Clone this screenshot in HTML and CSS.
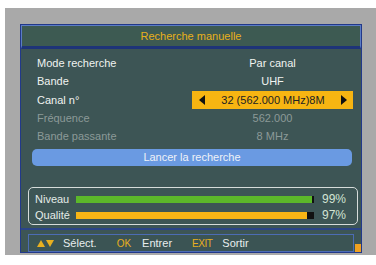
FILE: index.html
```html
<!DOCTYPE html>
<html>
	<head>
		<meta charset="utf-8">
		<title>Recherche manuelle</title>
		<link rel="stylesheet" href="styles.css">
	</head>
	<body>
		<div class="screen">
			<div class="panel">
				<div class="title">Recherche manuelle</div>

				<div class="content">
					<div class="rows">
						<div class="label">Mode recherche</div>
						<div class="value">Par canal</div>

						<div class="label">Bande</div>
						<div class="value">UHF</div>

						<div class="label">Canal n°</div>
						<div class="value selected">
							<span class="arrow left"></span>
							<span>32 (562.000 MHz)8M</span>
							<span class="arrow right"></span>
						</div>

						<div class="label off">Fréquence</div>
						<div class="value off">562.000</div>

						<div class="label off">Bande passante</div>
						<div class="value off">8 MHz</div>
					</div>

					<div class="button">Lancer la recherche</div>

					<div class="signal">
						<div class="meter">
							<span class="meter-name">Niveau</span>
							<span class="bar green"><span class="fill" style="width: 99%"></span></span>
							<span class="pct">99%</span>
						</div>
						<div class="meter">
							<span class="meter-name">Qualité</span>
							<span class="bar orange"><span class="fill" style="width: 97%"></span></span>
							<span class="pct">97%</span>
						</div>
					</div>
				</div>

				<div class="bottom">
					<div class="footer">
						<span class="key tri"><span class="up"></span><span class="down"></span></span>
						<span class="hint">Sélect.</span>
						<span class="key ok">OK</span>
						<span class="hint">Entrer</span>
						<span class="key exit">EXIT</span>
						<span class="hint">Sortir</span>
					</div>
					<span class="blip"></span>
				</div>
			</div>
		</div>
	</body>
</html>
```

FILE: styles.css
```css
body {
	margin: 0;
	background: #fff;
	font-family: "Liberation Sans", Arial, sans-serif;
	font-size: 11px;
}

.screen {
	margin: 8px 0 0 5px;
	height: 247px;
	background: #a9a9a9;
	padding: 16px 0 0 15px;
	box-sizing: border-box;
}

.panel {
	width: 342px;
	height: 229px;
	box-sizing: border-box;
	border: 1px solid #22398a;
	background: #3d5555;
	display: flex;
	flex-direction: column;
}

.title {
	height: 24px;
	line-height: 20px;
	box-sizing: border-box;
	border: 1px solid #5b7cc4;
	border-bottom: 3px solid #1e3478;
	background: #3d5a52;
	color: #e8b01a;
	text-align: center;
}

.content {
	padding: 5px 9px 0 10px;
	height: 181px;
	box-sizing: border-box;
	border-bottom: 2px solid #2a4488;
}

.rows {
	display: grid;
	grid-template-columns: 161px 161px;
	grid-auto-rows: 18.3px;
	align-items: center;
}

.label {
	color: #f0f3f0;
	padding-left: 6px;
}

.value {
	color: #f0f3f0;
	text-align: center;
}

.off {
	color: #8c9a98;
}

.value.selected {
	background: #f7b512;
	color: #222;
	height: 18px;
	display: flex;
	align-items: center;
	justify-content: space-between;
	padding: 0 6px 0 7px;
}

.arrow {
	width: 0;
	height: 0;
	border-top: 5px solid transparent;
	border-bottom: 5px solid transparent;
}

.arrow.left {
	border-right: 6px solid #111;
}

.arrow.right {
	border-left: 6px solid #111;
}

.button {
	margin: 4px 0 0 1px;
	height: 17px;
	line-height: 17px;
	border-radius: 5px;
	background: #6a9ae2;
	color: #eef2f8;
	text-align: center;
}

.signal {
	margin: 21px -6px 0 -3px;
	height: 38px;
	box-sizing: border-box;
	border: 1px solid #d6dcda;
	border-radius: 5px;
	padding: 3px 0 0 6px;
}

.meter {
	display: flex;
	align-items: center;
	height: 16px;
}

.meter-name {
	width: 41px;
	color: #e4ece8;
}

.bar {
	width: 238px;
	height: 7px;
	background: #111;
}

.fill {
	display: block;
	height: 100%;
}

.green .fill {
	background: #5cb82a;
}

.orange .fill {
	background: #f8b515;
}

.pct {
	margin-left: 8px;
	color: #d2e4d4;
	font-size: 12px;
}

.bottom {
	flex: 1;
	display: flex;
	align-items: flex-end;
	padding: 0 0 0 7px;
}

.footer {
	width: 327px;
	height: 18px;
	box-sizing: border-box;
	border: 1px solid #4c6cb4;
	background: #3b5454;
	display: flex;
	align-items: center;
	padding-left: 8px;
	color: #e8eeee;
}

.key {
	color: #e8b020;
	font-size: 10px;
}

.tri {
	display: flex;
	gap: 1px;
	margin-right: 9px;
}

.up {
	border-left: 4px solid transparent;
	border-right: 4px solid transparent;
	border-bottom: 7px solid #e8b020;
}

.down {
	border-left: 4px solid transparent;
	border-right: 4px solid transparent;
	border-top: 7px solid #e8b020;
}

.hint {
	margin-right: 20px;
}

.ok {
	margin-right: 11px;
}

.exit {
	margin-right: 10px;
	letter-spacing: -0.5px;
}

.blip {
	width: 6px;
	height: 8px;
	background: #f0a020;
	margin-left: 1px;
}
```
